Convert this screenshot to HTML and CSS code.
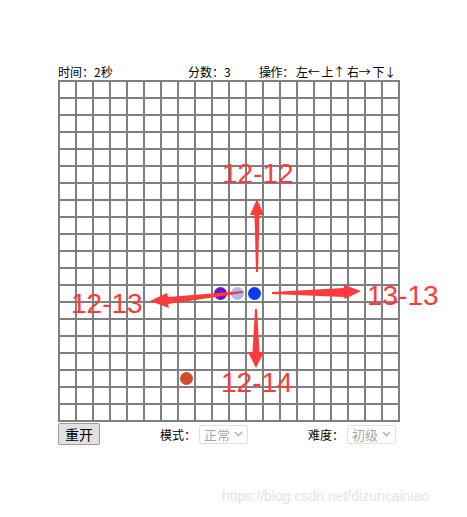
FILE: index.html
```html
<!DOCTYPE html>
<html lang="zh-CN">
<head>
  <meta charset="UTF-8" />
  <title>贪吃蛇</title>
  <link rel="stylesheet" href="styles.css">
</head>
<body>

<div class="game">
  <div class="status">
    <span class="time">时间：2秒</span>
    <span class="score">分数：3</span>
    <span class="keys">操作： 左← 上↑ 右→ 下↓</span>
  </div>

  <div class="board">
    <div class="dot tail" style="grid-column: 10; grid-row: 13;"></div>
    <div class="dot body" style="grid-column: 11; grid-row: 13;"></div>
    <div class="dot head" style="grid-column: 12; grid-row: 13;"></div>
    <div class="dot food" style="grid-column: 8; grid-row: 18;"></div>
  </div>

  <div class="controls">
    <button class="restart">重开</button>
    <label class="field mode">模式：
      <span class="select">正常
        <svg width="9" height="6" viewBox="0 0 9 6"><path d="M1 1l3.5 3.5L8 1" fill="none" stroke="#b5b5b5" stroke-width="1.6"/></svg>
      </span>
    </label>
    <label class="field level">难度：
      <span class="select">初级
        <svg width="9" height="6" viewBox="0 0 9 6"><path d="M1 1l3.5 3.5L8 1" fill="none" stroke="#b5b5b5" stroke-width="1.6"/></svg>
      </span>
    </label>
  </div>
</div>

<p class="watermark">https://blog.csdn.net/dizuncainiao</p>

<!-- red notes drawn over the screenshot -->
<svg class="notes" width="467" height="517" viewBox="0 0 467 517">
  <g fill="#ff3a3a">
    <polygon points="256,272 258,272 259.5,215 264,215 257,199 250,215 254.5,215"/>
    <polygon points="255,309 257,309 259.5,352 264,352 256,368 248,352 252.5,352"/>
    <polygon points="243,291 243,293 168,304 169,308 150,301 167,293 168,297"/>
    <polygon points="272,292 272,294 344,297 345,299 361,291 344,285 344,288"/>
    <text x="222" y="183">12-12</text>
    <text x="71" y="313">12-13</text>
    <text x="367" y="305">13-13</text>
    <text x="221" y="392">12-14</text>
  </g>
</svg>

</body>
</html>
```

FILE: styles.css
```css
* {
  margin: 0;
  padding: 0;
  box-sizing: border-box;
}

body {
  width: 467px;
  height: 517px;
  background: #fff;
  font-family: "Microsoft YaHei", "Noto Sans CJK SC", "Liberation Sans", sans-serif;
  color: #000;
  position: relative;
  overflow: hidden;
}

.game {
  width: 342px;
  margin-left: 58px;
  padding-top: 64px;
}

/* top line */
.status {
  display: flex;
  height: 16px;
  font-size: 12px;
  line-height: 16px;
  white-space: nowrap;
}

.status .time { width: 130px; }
.status .score { width: 71px; }
.status .keys { letter-spacing: -0.4px; }

/* board: 20 x 20 cells of 15px, 2px lines */
.board {
  display: grid;
  grid-template-columns: repeat(20, 15px);
  grid-template-rows: repeat(20, 15px);
  gap: 2px;
  padding: 2px;
  width: 342px;
  height: 342px;
  background-color: #fff;
  background-image:
    repeating-linear-gradient(to right, #7f7f7f 0 2px, transparent 2px 17px),
    repeating-linear-gradient(to bottom, #7f7f7f 0 2px, transparent 2px 17px);
}

.dot {
  width: 13px;
  height: 13px;
  border-radius: 50%;
  align-self: center;
  justify-self: center;
}

.tail { background: #6a10cf; }
.body { background: #a7bff4; }
.head { background: #0a3df2; }
.food { background: #d44a2b; }

/* bottom line */
.controls {
  display: flex;
  align-items: center;
  height: 24px;
  font-size: 12px;
}

.restart {
  width: 42px;
  height: 22px;
  font: 14px "Microsoft YaHei", "Noto Sans CJK SC", sans-serif;
  background: #e1e1e1;
  border: 1px solid #9a9a9a;
  border-radius: 2px;
  color: #000;
}

.field {
  display: flex;
  align-items: center;
}

.mode { margin-left: 60px; }
.level { margin-left: 60px; }

.select {
  display: flex;
  align-items: center;
  justify-content: space-between;
  width: 49px;
  height: 19px;
  margin-left: 3px;
  padding: 0 4px 0 4px;
  border: 1px solid #e0e0e0;
  border-radius: 2px;
  font-size: 13px;
  color: #a8a8a8;
}

.watermark {
  margin-top: 42px;
  margin-left: 222px;
  font: 14px "Liberation Sans", sans-serif;
  color: #e4e4e4;
}

.notes {
  position: absolute;
  top: 0;
  left: 0;
  pointer-events: none;
}

.notes text {
  font: 28px "Liberation Sans", "Noto Sans", sans-serif;
}
```
